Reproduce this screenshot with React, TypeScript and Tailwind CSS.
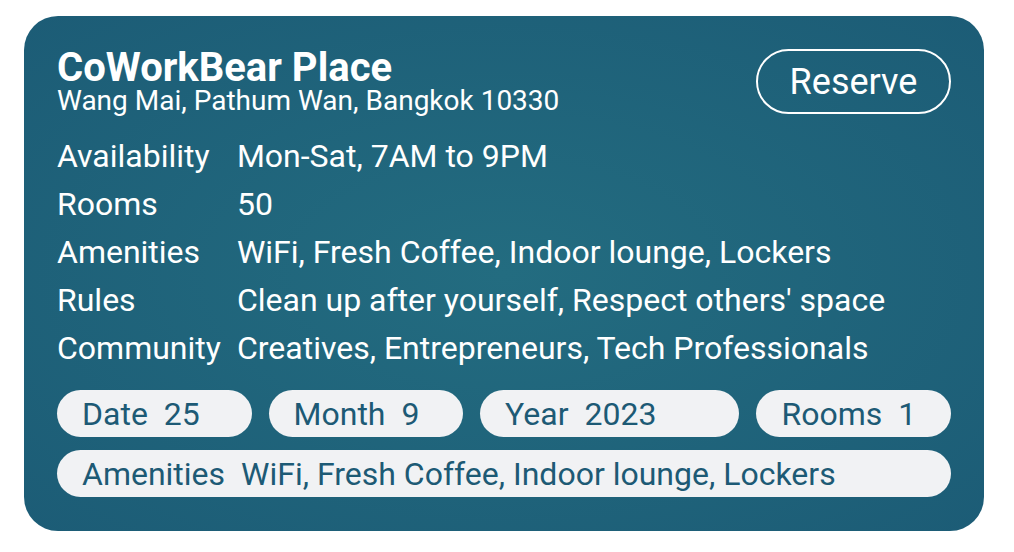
const details = [
  { label: "Availability", value: "Mon-Sat, 7AM to 9PM" },
  { label: "Rooms", value: "50" },
  { label: "Amenities", value: "WiFi, Fresh Coffee, Indoor lounge, Lockers" },
  { label: "Rules", value: "Clean up after yourself, Respect others' space" },
  { label: "Community", value: "Creatives, Entrepreneurs, Tech Professionals" },
];

function Pill({ label, value }: { label: string; value: string }) {
  return (
    <div className="flex items-center h-[47px] rounded-full bg-[#f1f2f4] px-[25px] text-[32px] text-[#1d5a75] whitespace-nowrap">
      <span>{label}</span>
      <span className="ml-[16px]">{value}</span>
    </div>
  );
}

export default function App() {
  return (
    <div
      className="min-h-screen bg-white pt-4 pl-6"
      style={{ fontFamily: "Roboto, 'Liberation Sans', sans-serif" }}
    >
      <div className="w-[960px] h-[515px] rounded-[34px] bg-[radial-gradient(ellipse_at_center,#236c80_0%,#1c5c76_100%)] text-white px-[33px] pt-[32px]">
        {/* Header */}
        <div className="flex items-start justify-between">
          <div>
            <h1 className="text-[40px] font-bold leading-[40px]">CoWorkBear Place</h1>
            <p className="text-[28px] leading-[26px]">Wang Mai, Pathum Wan, Bangkok 10330</p>
          </div>
          <button className="mt-[1px] h-[65px] w-[195px] rounded-full border-2 border-white text-[36px] text-white">
            Reserve
          </button>
        </div>

        {/* Details */}
        <div className="mt-[18px] grid grid-cols-[auto_1fr] gap-x-[16px] text-[32px] leading-[48px]">
          {details.map((d) => (
            <div key={d.label} className="contents">
              <span>{d.label}</span>
              <span>{d.value}</span>
            </div>
          ))}
        </div>

        {/* Booking pills */}
        <div className="mt-[18px] flex flex-col gap-[13px]">
          <div className="grid grid-cols-[3fr_3fr_4fr_3fr] gap-[17px]">
            <Pill label="Date" value="25" />
            <Pill label="Month" value="9" />
            <Pill label="Year" value="2023" />
            <Pill label="Rooms" value="1" />
          </div>
          <Pill label="Amenities" value="WiFi, Fresh Coffee, Indoor lounge, Lockers" />
        </div>
      </div>
    </div>
  );
}
